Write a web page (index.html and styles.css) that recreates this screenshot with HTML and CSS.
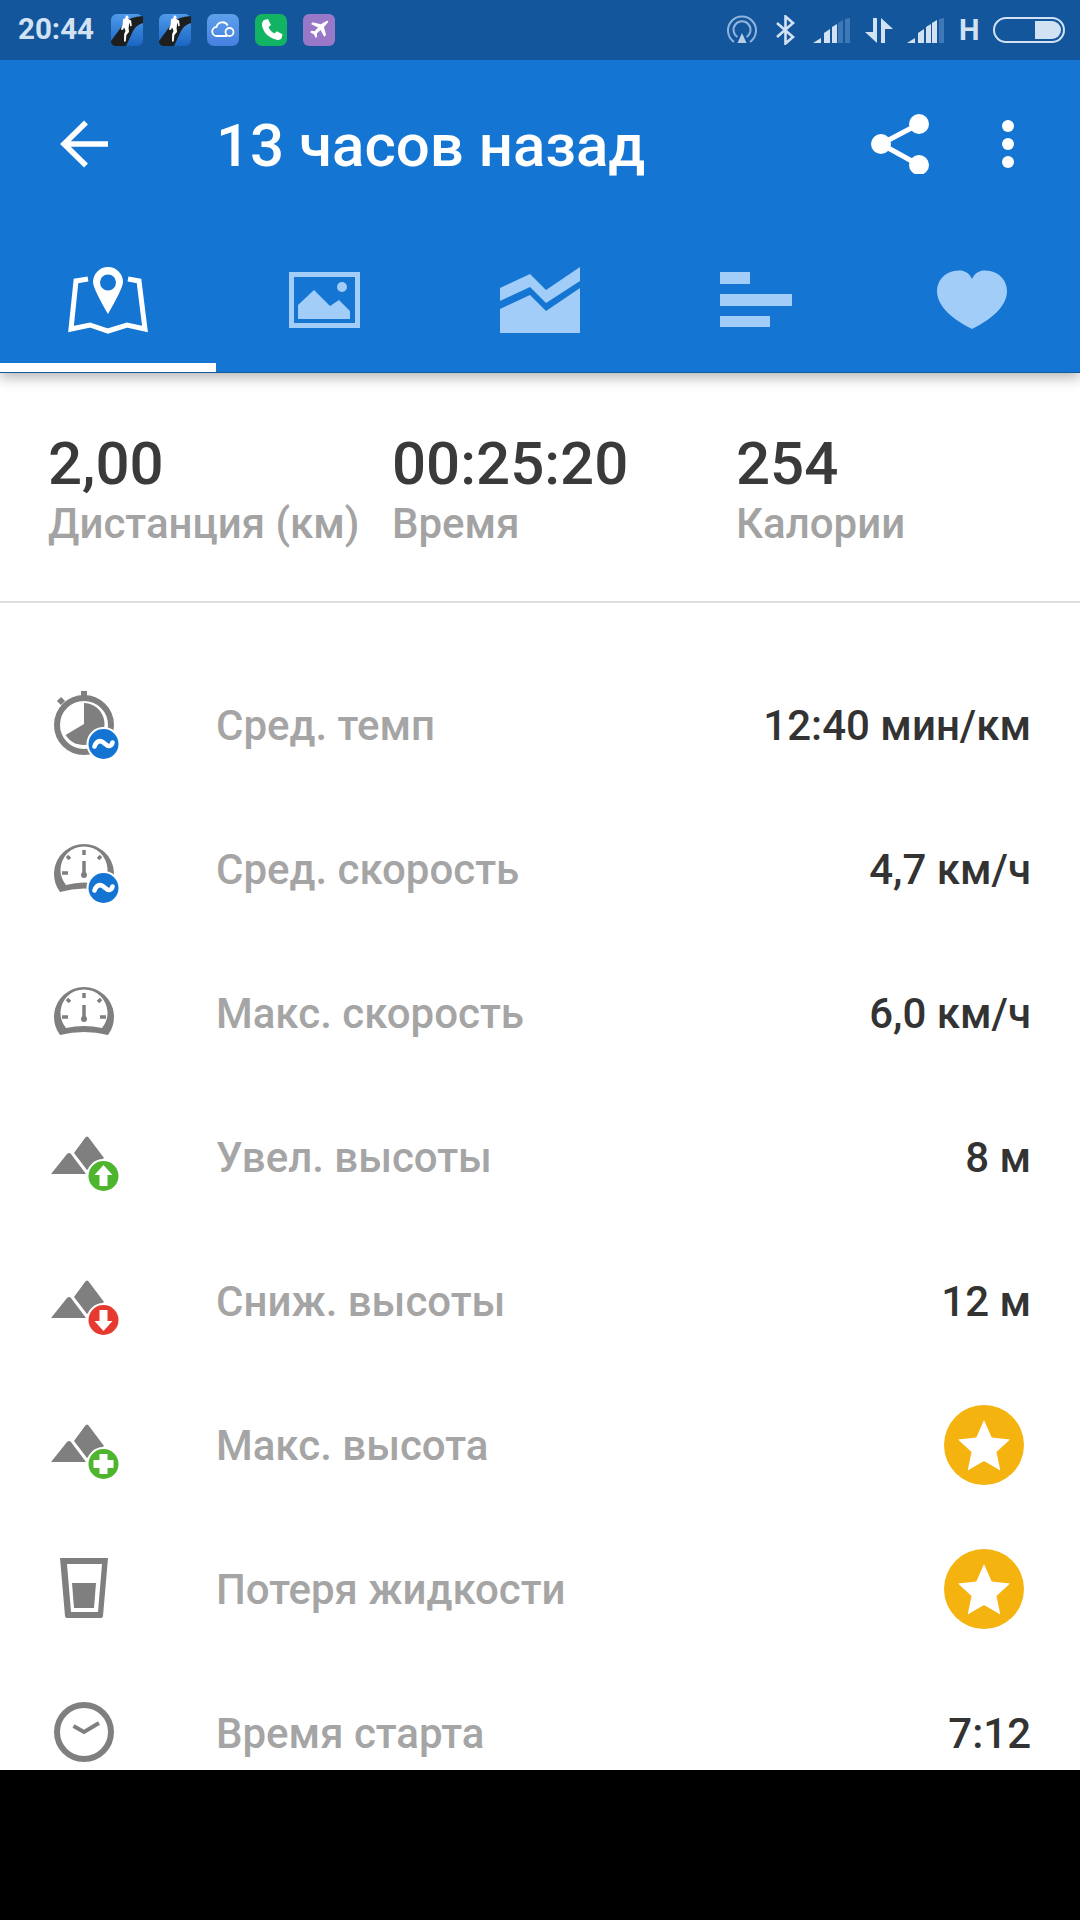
FILE: index.html
```html
<!DOCTYPE html>
<html lang="ru">
<head>
<meta charset="utf-8">
<title>13 часов назад</title>
<link rel="stylesheet" href="styles.css">
</head>
<body>
<svg class="defs" width="0" height="0" aria-hidden="true">
  <defs>
    <linearGradient id="runbg" x1="0" y1="0" x2="0" y2="1"><stop offset="0" stop-color="#4f9bea"/><stop offset="1" stop-color="#1a66c4"/></linearGradient>
    <linearGradient id="cloudbg" x1="0" y1="0" x2="0" y2="1"><stop offset="0" stop-color="#5ea0ea"/><stop offset="1" stop-color="#4680e0"/></linearGradient>
    <symbol id="runner" viewBox="0 0 32 32">
      <rect width="32" height="32" rx="6" fill="url(#runbg)"/>
      <path d="M0 27 L14 8 Q19 3 32 2 V9 Q25 11 22 17 L15 32 H5 Q1 32 0 28Z" fill="#1e1e1e"/>
      <path d="M15 1.5a2.2 2.2 0 0 1 2.6 2.2l-.5 1.3 3 1.6.7 5.5-1.4.2-1-3.8-.8 5.5 .4 4-2.6 3-.7 6.5h-1.7l.2-7.5 1.3-3-1.3-3.6-1.5 2.7-1.8-.6 1.8-5.2 .3-5 2.2-1Z" fill="#fff"/>
    </symbol>
    <symbol id="wave" viewBox="0 0 80 80">
      <circle cx="59.5" cy="58" r="17" fill="#fff"/><circle cx="59.5" cy="58" r="15" fill="#1474d2"/>
      <path d="M50.5 60.5c1.500-4 4-6 7-5 3 1 5 5 8 4.500 1.500-.3 2.500-1.500 3-3.500" fill="none" stroke="#fff" stroke-width="4.6" stroke-linecap="round"/>
    </symbol>
    <symbol id="peaks" viewBox="0 0 80 80">
      <path d="M7 56 L23 36 Q25 34 27 36 L42 56Z" class="ic-fill"/>
      <path d="M30 35 L41 20 Q43 17 45 20 L60 40 L43 52Z" class="ic-fill"/>
    </symbol>
    <symbol id="star" viewBox="0 0 80 80">
      <circle cx="40" cy="40" r="40" fill="#f4b30e"/>
      <path d="M40 15 L47.7 32.5 L66 34.5 L52.5 47 L56.3 65.5 L40 56 L23.7 65.5 L27.5 47 L14 34.5 L32.3 32.5Z" fill="#fff"/>
    </symbol>
  </defs>
</svg>
<div class="screen">
  <header class="appbar">
    <div class="statusbar">
      <div class="status-left">
        <span class="clock">20:44</span>
        <svg class="notif" viewBox="0 0 32 32"><use href="#runner"/></svg>
        <svg class="notif" viewBox="0 0 32 32"><use href="#runner"/></svg>
        <svg class="notif" viewBox="0 0 32 32"><rect width="32" height="32" rx="7" fill="url(#cloudbg)"/><path d="M10 22a4.5 4.5 0 0 1-.5-9 6 6 0 0 1 11.200-1.500M10 22h10" fill="none" stroke="#fff" stroke-width="1.800"/><circle cx="22.500" cy="18" r="4" fill="none" stroke="#fff" stroke-width="1.800"/></svg>
        <svg class="notif" viewBox="0 0 32 32"><rect width="32" height="32" rx="7" fill="#12b463"/><path d="M9 6l4-1 3 6-2.500 2c1 3 3 5 6 6.500l2.200-2.300 5.800 3-1 4c-.8 1.500-3 2-5 1.500C13 23.500 8.500 18.500 7 11.500 6.700 9.500 7.500 7 9 6Z" fill="#fff"/></svg>
        <svg class="notif" viewBox="0 0 32 32"><rect width="32" height="32" rx="6" fill="#9a78c8"/><path d="M23.500 7c1.300-.6 2 .2 1.400 1.500L21 13l2 8-1.800 1.800-3.700-6.800-3.700 3.500.4 3-1.400 1.400-2-3.700-3.700-2 1.400-1.400 3 .4 3.600-3.700L8 10l1.800-1.800 8 2Z" fill="#fff"/></svg>
      </div>
      <div class="status-right">
        <svg class="sys sys-cast" viewBox="0 0 30 30"><g fill="none" stroke="#8fb3da" stroke-width="2"><path d="M7 27a14 14 0 1 1 16 0"/><path d="M10.500 22a8.500 8.500 0 1 1 9 0"/></g><path d="M15 18l4.500 10h-9Z" fill="#b8cfe8"/></svg>
        <svg class="sys sys-bt" viewBox="0 0 21 30"><path d="M2 8l16 14-7.500 6.500V1.500L18 8 2 22" fill="none" stroke="#d3e2f3" stroke-width="2.600"/></svg>
        <svg class="sys sys-signal" viewBox="0 0 37 25"><path d="M0 25 L8 20V25ZM11 25V15l6-4V25ZM19 25V9l5-3V25Z" fill="#d3e2f3"/><path d="M25 25V5l5-3V25ZM32 25V1l5-1V25Z" fill="#3f78b6"/></svg>
        <svg class="sys sys-arrows" viewBox="0 0 28 25"><path d="M8 0h4v25l-12-11h8ZM16 25h4V11h8L16 0Z" fill="#d3e2f3"/></svg>
        <svg class="sys sys-signal" viewBox="0 0 37 25"><path d="M0 25 L8 20V25ZM11 25V15l6-4V25ZM19 25V9l5-3V25ZM25 25V5l5-3V25Z" fill="#d3e2f3"/><path d="M32 25V1l5-1V25Z" fill="#3f78b6"/></svg>
        <span class="net">H</span>
        <span class="battery"><span class="battery-level"></span></span>
      </div>
    </div>
    <div class="toolbar">
      <svg class="back" viewBox="0 0 48 48"><path d="M48 24H5M26 2.500 4 24l22 21.500" fill="none" stroke="#fff" stroke-width="5.500"/></svg>
      <h1 class="title">13 часов назад</h1>
      <svg class="share" viewBox="0 0 60 60"><path d="M49 10 11 30 49 51" fill="none" stroke="#fff" stroke-width="5"/><circle cx="49" cy="10" r="10" fill="#fff"/><circle cx="11" cy="30" r="10" fill="#fff"/><circle cx="49" cy="51" r="10" fill="#fff"/></svg>
      <span class="more"><i></i><i></i><i></i></span>
    </div>
    <nav class="tabs">
      <div class="tab tab-active">
        <svg class="tab-icon" viewBox="0 0 100 100"><path d="M30 29 18 31 13 79 32 75 50 81 69 75 87 79 81 31 70 29" fill="none" stroke="#fff" stroke-width="5"/><path fill-rule="evenodd" d="M50 17a15 15 0 0 1 15 15c0 5-8 20-15 32-7-12-15-27-15-32a15 15 0 0 1 15-15Zm0 7.500a8 8 0 1 0 0 16 8 8 0 0 0 0-16Z" fill="#fff"/></svg>
      </div>
      <div class="tab">
        <svg class="tab-icon" viewBox="0 0 100 100"><rect x="17.500" y="24.500" width="66" height="51" fill="none" stroke="#a2cdf8" stroke-width="5"/><path d="M24 69V55L40 40 56 56 65 50 76 61V69Z" fill="#a2cdf8"/><circle cx="68" cy="37" r="5" fill="#a2cdf8"/></svg>
      </div>
      <div class="tab">
        <svg class="tab-icon" viewBox="0 0 100 100"><path d="M10 38 40 24 56 40 90 17V31L56 53 40 37 10 51ZM10 59 40 45 56 61 90 38V83H10Z" fill="#a2cdf8"/></svg>
      </div>
      <div class="tab">
        <svg class="tab-icon" viewBox="0 0 100 100"><path d="M14 22H44V34H14ZM14 44H86V56H14ZM14 66H64V77H14Z" fill="#a2cdf8"/></svg>
      </div>
      <div class="tab">
        <svg class="tab-icon" viewBox="0 0 100 100"><path d="M50 29C46 20 38 20 32 21 22 23 15 31 15 41 15 57 32 70 50 79 68 70 85 57 85 41 85 31 78 23 68 21 62 20 54 20 50 29Z" fill="#a2cdf8"/></svg>
      </div>
    </nav>
  </header>

  <main class="content">
    <section class="stats">
      <div class="stat"><div class="stat-value">2,00</div><div class="stat-label">Дистанция (км)</div></div>
      <div class="stat"><div class="stat-value">00:25:20</div><div class="stat-label">Время</div></div>
      <div class="stat"><div class="stat-value">254</div><div class="stat-label">Калории</div></div>
    </section>
    <ul class="list">
      <li class="row">
        <svg class="row-icon" viewBox="0 0 80 80"><g class="ic-line"><circle cx="40" cy="39" r="27"/><path d="M40 5V12M19 17 15 13"/></g><path d="M40 38V17A21 21 0 1 1 21.600 49Z" class="ic-fill"/><use href="#wave" width="80" height="80"/></svg>
        <span class="row-label">Сред. темп</span><span class="row-value">12:40 мин/км</span>
      </li>
      <li class="row">
        <svg class="row-icon" viewBox="0 0 80 80"><path fill-rule="evenodd" d="M16 62A30 30 0 1 1 64 62Q40 55 16 62ZM22 55Q40 50 58 55A23.500 23.500 0 1 0 22 55Z" class="ic-fill"/><path d="M40 20V25M23 26l3 3M57 26l-3 3M18 43H24M40 31V45" class="ic-tick"/><circle cx="40" cy="45" r="3" class="ic-fill"/><use href="#wave" width="80" height="80"/></svg>
        <span class="row-label">Сред. скорость</span><span class="row-value">4,7 км/ч</span>
      </li>
      <li class="row">
        <svg class="row-icon" viewBox="0 0 80 80"><path fill-rule="evenodd" d="M16 61A30 30 0 1 1 64 61Q40 55 16 61ZM22 54Q40 50 58 54A23.500 23.500 0 1 0 22 54Z" class="ic-fill"/><path d="M40 19V24M23 25l3 3M57 25l-3 3M18 43H24M56 43H62M40 31V45" class="ic-tick"/><circle cx="40" cy="45" r="3" class="ic-fill"/></svg>
        <span class="row-label">Макс. скорость</span><span class="row-value">6,0 км/ч</span>
      </li>
      <li class="row">
        <svg class="row-icon" viewBox="0 0 80 80"><use href="#peaks" width="80" height="80"/><circle cx="59.500" cy="58" r="17" fill="#fff"/><circle cx="59.500" cy="58" r="15" fill="#4fb52e"/><path d="M59.500 47 68.500 57H63.500V68H55.500V57H50.500Z" fill="#fff"/></svg>
        <span class="row-label">Увел. высоты</span><span class="row-value">8 м</span>
      </li>
      <li class="row">
        <svg class="row-icon" viewBox="0 0 80 80"><use href="#peaks" width="80" height="80"/><circle cx="59.500" cy="58" r="17" fill="#fff"/><circle cx="59.500" cy="58" r="15" fill="#e63a30"/><path d="M59.500 69 50.500 59H55.500V48H63.500V59H68.500Z" fill="#fff"/></svg>
        <span class="row-label">Сниж. высоты</span><span class="row-value">12 м</span>
      </li>
      <li class="row">
        <svg class="row-icon" viewBox="0 0 80 80"><use href="#peaks" width="80" height="80"/><circle cx="59.500" cy="58" r="17" fill="#fff"/><circle cx="59.500" cy="58" r="15" fill="#4fb52e"/><path d="M55.500 48H63.500V54H69.500V62H63.500V68H55.500V62H49.500V54H55.500Z" fill="#fff"/></svg>
        <span class="row-label">Макс. высота</span><svg class="row-star" viewBox="0 0 80 80"><use href="#star" width="80" height="80"/></svg>
      </li>
      <li class="row">
        <svg class="row-icon" viewBox="0 0 80 80"><path fill-rule="evenodd" d="M16 8H64L59 66Q59 68 57 68H23Q21 68 21 66ZM23 14 27 62H54L58 14Z" class="ic-fill"/><path d="M28 33H52L50 58H30Z" class="ic-fill"/></svg>
        <span class="row-label">Потеря жидкости</span><svg class="row-star" viewBox="0 0 80 80"><use href="#star" width="80" height="80"/></svg>
      </li>
      <li class="row">
        <svg class="row-icon" viewBox="0 0 80 80"><g class="ic-line"><circle cx="40" cy="38" r="27"/></g><path d="M29.500 32 40 38 55 29" class="ic-tick ic-hands"/></svg>
        <span class="row-label">Время старта</span><span class="row-value">7:12</span>
      </li>
    </ul>
  </main>
  <div class="navbar"></div>
</div>
</body>
</html>
```
FILE: styles.css
```css
* { box-sizing: border-box; }
html, body { margin: 0; padding: 0; background: #000; }
body { font-family: Roboto, "Noto Sans", sans-serif; }
.defs { display: block; height: 0; }
.ic-fill { fill: #7f7f7f; }
.ic-line { fill: none; stroke: #7f7f7f; stroke-width: 6; }
.ic-tick { fill: none; stroke: #7f7f7f; stroke-width: 3.5; }
.ic-hands { stroke-width: 4; }

.screen { width: 1080px; height: 1920px; display: flex; flex-direction: column; overflow: hidden; background: #fff; }

.appbar { flex: none; background: #1475d2; position: relative; z-index: 2; border-bottom: 1px solid #10589f; box-shadow: 0 5px 12px rgba(0, 0, 0, 0.28); }

.statusbar { height: 60px; background: #14569c; display: flex; justify-content: space-between; align-items: center; padding: 0 15px 0 18px; }
.status-left { display: flex; align-items: center; }
.clock { font-size: 29.5px; font-weight: 700; color: #d3e2f3; width: 93px; line-height: 1; }
.notif { width: 32px; height: 32px; margin-right: 16px; display: block; }
.status-right { display: flex; align-items: center; }
.sys { display: block; }
.sys-cast { width: 30px; height: 30px; margin-right: 18px; }
.sys-bt { width: 21px; height: 30px; margin-right: 17px; }
.sys-signal { width: 37px; height: 25px; margin-right: 15px; }
.sys-arrows { width: 28px; height: 25px; margin-right: 14px; }
.net { font-size: 29px; font-weight: 700; color: #d3e2f3; line-height: 1; width: 34px; }
.battery { width: 72px; height: 26px; border: 2.5px solid #d3e2f3; border-radius: 13px; display: flex; justify-content: flex-end; padding: 2px; }
.battery-level { width: 26px; background: #d3e2f3; border-radius: 0 10px 10px 0; }

.toolbar { height: 168px; display: flex; align-items: center; padding-right: 66px; }
.back { width: 48px; height: 48px; margin-left: 60px; flex: none; }
.title { margin: 3px 0 0 108px; flex: 1; font-size: 60px; font-weight: 500; color: #fff; line-height: 1; }
.share { width: 60px; height: 60px; flex: none; }
.more { display: flex; flex-direction: column; gap: 6px; margin-left: 72px; flex: none; }
.more i { display: block; width: 12px; height: 12px; border-radius: 50%; background: #fff; }

.tabs { height: 144px; display: grid; grid-template-columns: repeat(5, 216px); }
.tab { display: flex; align-items: center; justify-content: center; position: relative; }
.tab-active::after { content: ""; position: absolute; left: 0; right: 0; bottom: 0; height: 9px; background: #fff; }
.tab-icon { width: 100px; height: 100px; display: block; }

.content { flex: 1; min-height: 0; overflow: hidden; background: #fff; }
.stats { display: grid; grid-template-columns: repeat(3, 344px); padding: 56px 0 52px 48px; border-bottom: 2px solid #dedede; height: 230px; }
.stat-value { font-size: 60px; font-weight: 500; line-height: 70px; color: #3a3a3a; }
.stat-label { font-size: 42px; font-weight: 500; line-height: 50px; color: #a3a3a3; white-space: nowrap; }

.list { list-style: none; margin: 0; padding: 51px 49px 0 44px; }
.row { height: 144px; display: flex; align-items: center; }
.row-icon { width: 80px; height: 80px; flex: none; display: block; margin-right: 92px; }
.row-label { flex: 1; font-size: 42px; font-weight: 500; color: #a5a5a5; padding-bottom: 2px; }
.row-value { font-size: 42px; font-weight: 500; color: #333; padding-bottom: 2px; }
.row-star { width: 80px; height: 80px; flex: none; display: block; margin: 0 7px 3px 0; }

.navbar { flex: none; height: 150px; background: #000; }
```
